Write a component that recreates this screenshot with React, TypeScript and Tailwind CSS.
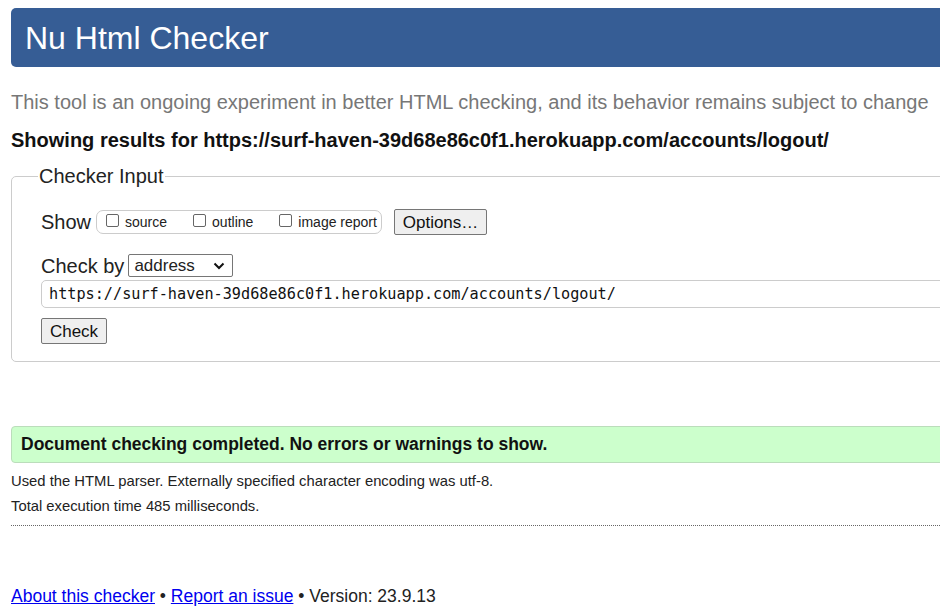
import React from "react";

export default function App() {
  return (
    <div className="w-[940px] h-[614px] overflow-hidden bg-white text-[#222] [font-family:'Liberation_Sans',Arial,sans-serif]">
      <div className="w-[1000px] pl-[11px] pt-[8px]">
        <header className="h-[59px] bg-[#365d95] rounded-[5px] flex items-center pl-[14px]">
          <h1 className="text-white text-[32px] leading-none">Nu Html Checker</h1>
        </header>
        <p className="text-[#777] text-[20px] leading-none mt-[25px]">
          This tool is an ongoing experiment in better HTML checking, and its behavior remains subject to change
        </p>
        <p className="font-bold text-[20px] leading-none mt-[18px] text-[#111]">
          Showing results for https://surf-haven-39d68e86c0f1.herokuapp.com/accounts/logout/
        </p>
        <fieldset className="mt-[16px] border border-[#ccc] rounded-[5px] px-[29px] pt-0 h-[196px]">
          <legend className="text-[20px] leading-none px-[1px] -ml-[3px] text-[#222]">Checker Input</legend>
          <div className="flex items-center mt-[23px] h-[26px]">
            <span className="text-[20px] leading-none">Show</span>
            <div className="ml-[5px] h-[24px] w-[286px] border border-[#ccc] rounded-[7px] flex items-center text-[14px] pl-[9px]">
              <span className="inline-block w-[13px] h-[13px] border border-[#666] rounded-[2px] mr-[6px] -mt-[3px]" />
              <span>source</span>
              <span className="inline-block w-[13px] h-[13px] border border-[#666] rounded-[2px] ml-[26px] mr-[6px] -mt-[3px]" />
              <span>outline</span>
              <span className="inline-block w-[13px] h-[13px] border border-[#666] rounded-[2px] ml-[26px] mr-[6px] -mt-[3px]" />
              <span>image report</span>
            </div>
            <button className="ml-[12px] h-[26px] w-[93px] border border-[#767676] rounded-[2px] bg-[#efefef] text-[17px] leading-none text-[#111]">
              Options…
            </button>
          </div>
          <div className="flex items-center mt-[19px] h-[23px]">
            <span className="text-[20px] leading-none">Check by</span>
            <div className="ml-[4px] h-[23px] w-[105px] border border-[#767676] rounded-[2px] flex items-center justify-between pl-[5px] pr-[7px] text-[17px] leading-none">
              <span>address</span>
              <svg width="12" height="8" viewBox="0 0 12 8">
                <path d="M1.5 1.5 L6 6 L10.5 1.5" fill="none" stroke="#111" strokeWidth="2" />
              </svg>
            </div>
          </div>
          <div className="mt-[3px] h-[28px] border border-[#ccc] rounded-l-[5px] flex items-center pl-[7px] text-[15.2px] text-[#111] [font-family:'DejaVu_Sans_Mono',monospace]">
            https://surf-haven-39d68e86c0f1.herokuapp.com/accounts/logout/
          </div>
          <button className="mt-[10px] h-[26px] w-[66px] border border-[#767676] rounded-[2px] bg-[#efefef] text-[17px] leading-none text-[#111]">
            Check
          </button>
        </fieldset>
        <div className="mt-[64px] h-[37px] bg-[#ccffcc] border border-[#bbddbb] rounded-l-[4px] flex items-center pl-[9px]">
          <span className="font-bold text-[17.5px] leading-none text-[#111]">
            Document checking completed. No errors or warnings to show.
          </span>
        </div>
        <p className="text-[14.8px] leading-none mt-[11px] text-[#222]">
          Used the HTML parser. Externally specified character encoding was utf-8.
        </p>
        <p className="text-[14.8px] leading-none mt-[10px] text-[#222]">Total execution time 485 milliseconds.</p>
        <div className="mt-[11px] border-t border-dotted border-[#666]" />
        <p className="mt-[62px] text-[17.5px] leading-none text-[#222]">
          <a className="text-[#0000ee] underline">About this checker</a> •{" "}
          <a className="text-[#0000ee] underline">Report an issue</a> • Version: 23.9.13
        </p>
      </div>
    </div>
  );
}
